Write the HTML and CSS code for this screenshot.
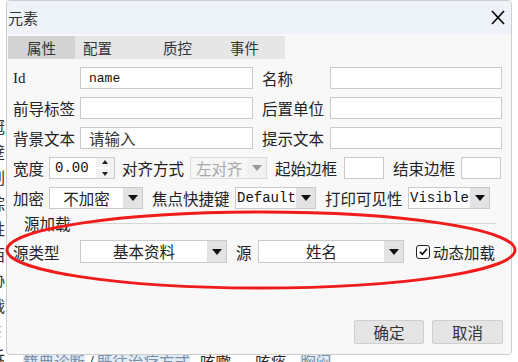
FILE: index.html
```html
<!DOCTYPE html>
<html lang="zh">
<head>
<meta charset="utf-8">
<title>元素</title>
<link rel="stylesheet" href="styles.css">
</head>
<body>
<div class="page">
  <div class="page-left">
    <span>冠</span><span>壁</span><span>刷</span><span>综</span><span>姓</span><span>西</span><span>协</span><span>战</span><span class="dim">茶</span><span>诉</span>
  </div>
  <div class="page-main">
    <span class="hl">籍典诊断</span><span class="slash">/</span><span class="hl">既往治疗方式</span><span class="plain">咳嗽</span><span class="plain">咳痰</span><span class="hl">胸闷</span>
  </div>
</div>

<div class="dialog">
  <div class="titlebar">
    <span class="title">元素</span>
    <svg class="close" width="14" height="15" viewBox="0 0 14 15"><path d="M1 1 L13 14 M13 1 L1 14" stroke="#111" stroke-width="1.8" fill="none"/></svg>
  </div>
  <div class="tabs">
    <span class="tab active">属性</span>
    <span class="tab t2">配置</span>
    <span class="tab t3">质控</span>
    <span class="tab t4">事件</span>
  </div>
  <div class="form">
    <div class="row">
      <span class="lbl w67 serif">Id</span>
      <div class="input w173"><span class="mono small">name</span></div>
      <span class="lbl w68 ml9">名称</span>
      <div class="input w172"></div>
    </div>
    <div class="row">
      <span class="lbl w67">前导标签</span>
      <div class="input w173"></div>
      <span class="lbl w68 ml9">后置单位</span>
      <div class="input w172"></div>
    </div>
    <div class="row">
      <span class="lbl w67">背景文本</span>
      <div class="input w173"><span class="cjk">请输入</span></div>
      <span class="lbl w68 ml9">提示文本</span>
      <div class="input w172"></div>
    </div>
    <div class="row">
      <span class="lbl w36">宽度</span>
      <div class="spin">
        <span class="spin-val mono">0.00</span>
        <span class="spin-btns"><span class="up"></span><span class="sep"></span><span class="down"></span></span>
      </div>
      <span class="lbl w68 ml7">对齐方式</span>
      <div class="sel disabled w77"><span class="val left6">左对齐</span><span class="btn"><span class="tri"></span></span></div>
      <span class="lbl w69 ml8">起始边框</span>
      <div class="input w40"></div>
      <span class="lbl w68 ml9">结束边框</span>
      <div class="input w40"></div>
    </div>
    <div class="row row5">
      <span class="lbl w36">加密</span>
      <div class="sel w94"><span class="val">不加密</span><span class="btn"><span class="tri"></span></span></div>
      <span class="lbl w83 ml9">焦点快捷键</span>
      <div class="sel w81"><span class="val left2 mono">Default</span><span class="btn"><span class="tri"></span></span></div>
      <span class="lbl w83 ml9">打印可见性</span>
      <div class="sel w82"><span class="val left2 mono">Visible</span><span class="btn"><span class="tri"></span></span></div>
    </div>
    <div class="legend-row">
      <span class="legend">源加载</span>
      <span class="rule"></span>
    </div>
    <div class="row row7">
      <span class="lbl w67">源类型</span>
      <div class="sel tall w147"><span class="val">基本资料</span><span class="btn"><span class="tri"></span></span></div>
      <span class="lbl w22 ml9">源</span>
      <div class="sel tall w146"><span class="val">姓名</span><span class="btn"><span class="tri"></span></span></div>
      <span class="chk"><svg width="11" height="11" viewBox="0 0 11 11"><path d="M2 5.8 L4.4 8.2 L9 2.8" stroke="#111" stroke-width="1.7" fill="none"/></svg></span>
      <span class="lbl chk-lbl">动态加载</span>
    </div>
    <div class="btn-row">
      <span class="button b1">确定</span>
      <span class="button b2">取消</span>
    </div>
  </div>
</div>

<svg class="annot" width="518" height="362" viewBox="0 0 518 362">
  <ellipse cx="261" cy="250" rx="254" ry="38" fill="none" stroke="#f01c1c" stroke-width="3"/>
</svg>
</body>
</html>
```

FILE: styles.css
```css
* { box-sizing: border-box; }
html, body {
  margin: 0;
  width: 518px;
  height: 362px;
  overflow: hidden;
  background: #fff;
  font-family: "Noto Sans CJK SC", "Noto Sans", sans-serif;
  color: #222;
}
body { position: relative; }

/* background page */
.page { display: flex; height: 362px; }
.page-left {
  width: 17px;
  margin-left: -11px;
  padding-top: 114px;
  display: flex;
  flex-direction: column;
  font-size: 16px;
  line-height: 25.5px;
  color: #333;
}
.page-left .dim { color: #aaa; font-size: 13px; }
.page-main {
  padding-top: 351px;
  padding-left: 17px;
  font-size: 15.5px;
  line-height: 20px;
  display: flex;
  align-items: flex-start;
  white-space: nowrap;
}
.page-main .hl { background: #e3edf8; color: #7a8ea6; }
.page-main .slash { color: #333; padding: 0 3px; }
.page-main .plain { color: #222; margin-left: 10px; margin-right: 14px; }

/* dialog */
.dialog {
  position: absolute;
  left: 6px;
  top: 0;
  width: 506px;
  height: 355px;
  border: 1px solid #cdcdcd;
  border-radius: 4px;
  background: #f8f8f8;
  z-index: 1;
  overflow: hidden;
}
.titlebar {
  height: 34px;
  margin-top: -1px;
  background: #eef3fa;
  display: flex;
  align-items: center;
  justify-content: space-between;
  padding: 0 6px 0 1px;
}
.title { font-size: 15px; color: #333; margin-top: 1px; }
.close { display: block; margin-top: 0; }

.tabs {
  margin: 2px 0 0 1px;
  width: 277px;
  height: 23px;
  background: #e6e6e6;
  display: flex;
  align-items: stretch;
  font-size: 14.5px;
  line-height: 23px;
  color: #333;
}
.tab { display: block; }
.tab.active { background: #d3d3d3; padding: 0 19px; }
.tab.t2 { margin-left: 8px; }
.tab.t3 { margin-left: 51px; }
.tab.t4 { margin-left: 38px; }

.form { padding: 8px 0 0 6px; }
.row {
  display: flex;
  align-items: center;
  height: 22px;
  margin-bottom: 8px;
}
.row5 { margin-bottom: 3px; }
.row7 { height: 23px; margin-top: 6px; margin-bottom: 0; }

.lbl {
  font-size: 15.5px;
  white-space: nowrap;
  color: #222;
  flex: none;
}
.serif { font-family: "Liberation Serif", serif; font-size: 15px; padding-left: 0; }
.mono { font-family: "Liberation Mono", monospace; font-size: 14px; color: #111; }
.small { font-size: 13px; }
.cjk { font-size: 15.5px; color: #333; }

.w22 { width: 22px; }
.w36 { width: 36px; }
.w40 { width: 40px; }
.w67 { width: 67px; }
.w68 { width: 68px; }
.w69 { width: 69px; }
.w77 { width: 77px; }
.w81 { width: 81px; }
.w82 { width: 82px; }
.w83 { width: 83px; }
.w94 { width: 94px; }
.w146 { width: 146px; }
.w147 { width: 147px; }
.w172 { width: 172px; }
.w173 { width: 173px; }
.ml7 { margin-left: 7px; }
.ml8 { margin-left: 8px; }
.ml9 { margin-left: 9px; }

.input {
  flex: none;
  height: 22px;
  border: 1px solid #cacaca;
  background: #fff;
  display: flex;
  align-items: center;
  padding-left: 8px;
}

.spin {
  flex: none;
  width: 66px;
  height: 22px;
  border: 1px solid #cacaca;
  background: #fff;
  display: flex;
}
.spin-val { flex: 1; padding-left: 5px; line-height: 20px; }
.spin-btns {
  width: 18px;
  background: #f2f2f2;
  display: flex;
  flex-direction: column;
  align-items: center;
  justify-content: center;
}
.spin-btns .up {
  width: 0; height: 0;
  border-left: 3.5px solid transparent;
  border-right: 3.5px solid transparent;
  border-bottom: 4px solid #222;
}
.spin-btns .sep { width: 18px; height: 2px; background: #fff; margin: 3px 0; }
.spin-btns .down {
  width: 0; height: 0;
  border-left: 3.5px solid transparent;
  border-right: 3.5px solid transparent;
  border-top: 4px solid #222;
}

.sel {
  flex: none;
  height: 22px;
  border: 1px solid #cacaca;
  background: #fff;
  display: flex;
  align-items: stretch;
}
.sel.tall { height: 23px; }
.sel .val {
  flex: 1;
  text-align: center;
  font-size: 15.5px;
  line-height: 20px;
  white-space: nowrap;
  overflow: hidden;
  color: #222;
}
.sel.tall .val { line-height: 21px; }
.sel .val.left6 { text-align: left; padding-left: 5px; }
.sel .val.left2 { text-align: left; padding-left: 1px; font-size: 14px; color: #111; }
.sel .btn {
  width: 19px;
  background: #e3e3e3;
  display: flex;
  align-items: center;
  justify-content: center;
}
.tri {
  width: 0; height: 0;
  border-left: 5.5px solid transparent;
  border-right: 5.5px solid transparent;
  border-top: 6px solid #111;
}
.sel.disabled { background: #f6f6f6; border-color: #dcdcdc; }
.sel.disabled .val { color: #a8a8a8; }
.sel.disabled .btn { background: #f1f1f1; }
.sel.disabled .tri { border-top-color: #999; }

.legend-row {
  height: 22px;
  display: flex;
  align-items: center;
}
.legend { font-size: 15.5px; margin-left: 11px; color: #222; }
.rule { flex: 1; height: 1px; background: #d6d6d6; margin: 1px 15px 0 6px; }

.chk {
  flex: none;
  width: 14px;
  height: 14px;
  margin-left: 12px;
  border: 1.6px solid #222;
  border-radius: 3px;
  display: flex;
  align-items: center;
  justify-content: center;
  background: #fff;
}
.chk svg { display: block; }
.chk-lbl { margin-left: 3px; }

.btn-row {
  display: flex;
  justify-content: flex-end;
  gap: 8px;
  padding-right: 8px;
  margin-top: 57px;
}
.button {
  height: 24px;
  background: #e5e5e5;
  border: 1px solid #cfcfcf;
  border-radius: 2px;
  font-size: 15.5px;
  line-height: 22px;
  text-align: center;
  color: #333;
}
.b1 { width: 70px; }
.b2 { width: 71px; }

.annot {
  position: absolute;
  left: 0;
  top: 0;
  z-index: 2;
  pointer-events: none;
}
```
